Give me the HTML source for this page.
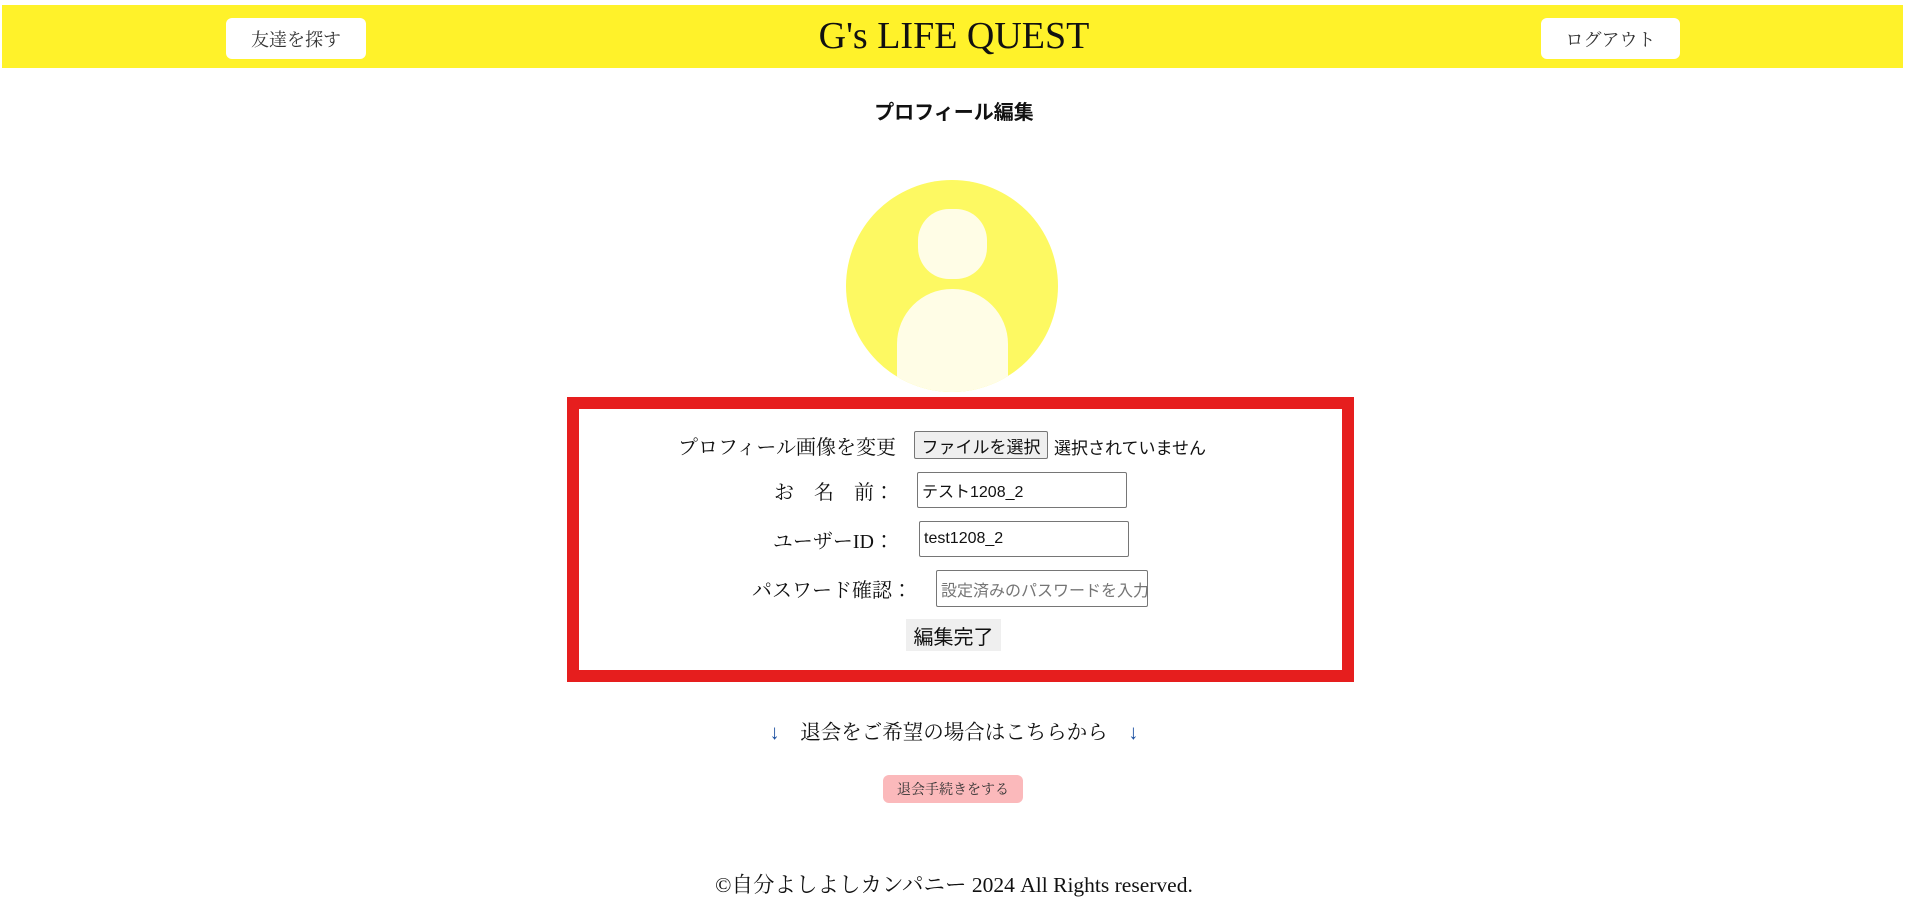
<!DOCTYPE html>
<html><head><meta charset="utf-8"><style>
*{margin:0;padding:0;box-sizing:border-box}
body{width:1908px;height:901px;background:#fff;position:relative;overflow:hidden;font-family:"Liberation Serif","Noto Serif CJK JP",serif;color:#111}
.a{position:absolute}
.hdr{left:2px;top:5px;width:1901px;height:63px;background:#fff22a}
.btn{background:#fff;border-radius:6px;font-size:18px;color:#333;display:flex;align-items:center;justify-content:center}
.title{left:0;width:1908px;top:14px;text-align:center;font-size:38px;color:#111}
.h2{left:0;width:1908px;top:96px;text-align:center;font-size:20px;font-weight:bold;font-family:"Liberation Sans","Noto Sans CJK JP",sans-serif}
.circ{left:846px;top:180px;width:212px;height:212px;border-radius:50%;background:#fdf962;overflow:hidden}
.head{left:72px;top:29px;width:69px;height:70px;border-radius:45%;background:#fffde6}
.body{left:51px;top:109px;width:111px;height:160px;border-radius:55px 55px 0 0;background:#fffde6}
.red{left:567px;top:397px;width:787px;height:285px;border:12px solid #e61e1e}
.lbl{font-size:20px;white-space:nowrap;text-align:right;width:400px}
.inp{border:1px solid #767676;border-radius:2px;background:#fff;font-family:"Liberation Sans","Noto Sans CJK JP",sans-serif;font-size:16px;padding-left:4px;display:flex;align-items:center}
.fb{background:#efefef;border:1px solid #767676;border-radius:2px;font-family:"Liberation Sans","Noto Sans CJK JP",sans-serif;font-size:17px;display:flex;align-items:center;justify-content:center}
</style></head><body>
<div class="a hdr"></div>
<div class="a btn" style="left:226px;top:18px;width:140px;height:41px">友達を探す</div>
<div class="a title">G's LIFE QUEST</div>
<div class="a btn" style="left:1541px;top:18px;width:139px;height:41px">ログアウト</div>
<div class="a h2">プロフィール編集</div>
<div class="a circ"><div class="a head"></div><div class="a body"></div></div>
<div class="a red"></div>
<div class="a lbl" style="left:496px;top:431px">プロフィール画像を変更</div>
<div class="a fb" style="left:914px;top:431px;width:134px;height:28px">ファイルを選択</div>
<div class="a" style="left:1054px;top:434px;font-family:'Liberation Sans','Noto Sans CJK JP',sans-serif;font-size:17px">選択されていません</div>
<div class="a lbl" style="left:494px;top:476px">お　名　前：</div>
<div class="a inp" style="left:917px;top:472px;width:210px;height:36px">テスト1208_2</div>
<div class="a lbl" style="left:494px;top:525px">ユーザーID：</div>
<div class="a inp" style="left:919px;top:521px;width:210px;height:36px">test1208_2</div>
<div class="a lbl" style="left:512px;top:574px">パスワード確認：</div>
<div class="a inp" style="left:936px;top:570px;width:212px;height:37px;color:#757575;overflow:hidden;white-space:nowrap">設定済みのパスワードを入力</div>
<div class="a" style="left:906px;top:619px;width:95px;height:32px;background:#efefef;font-size:20px;display:flex;align-items:center;justify-content:center;font-family:'Liberation Sans','Noto Sans CJK JP',sans-serif">編集完了</div>
<div class="a" style="left:0;width:1908px;top:715px;text-align:center;font-size:20.5px"><span style="color:#1a4fa0">↓</span>　退会をご希望の場合はこちらから　<span style="color:#1a4fa0">↓</span></div>
<div class="a" style="left:883px;top:775px;width:140px;height:28px;background:#fbb9bb;border-radius:6px;font-size:14px;display:flex;align-items:center;justify-content:center;color:#333">退会手続きをする</div>
<div class="a" style="left:0;width:1908px;top:868px;text-align:center;font-size:21.5px">©自分よしよしカンパニー 2024 All Rights reserved.</div>
</body></html>
